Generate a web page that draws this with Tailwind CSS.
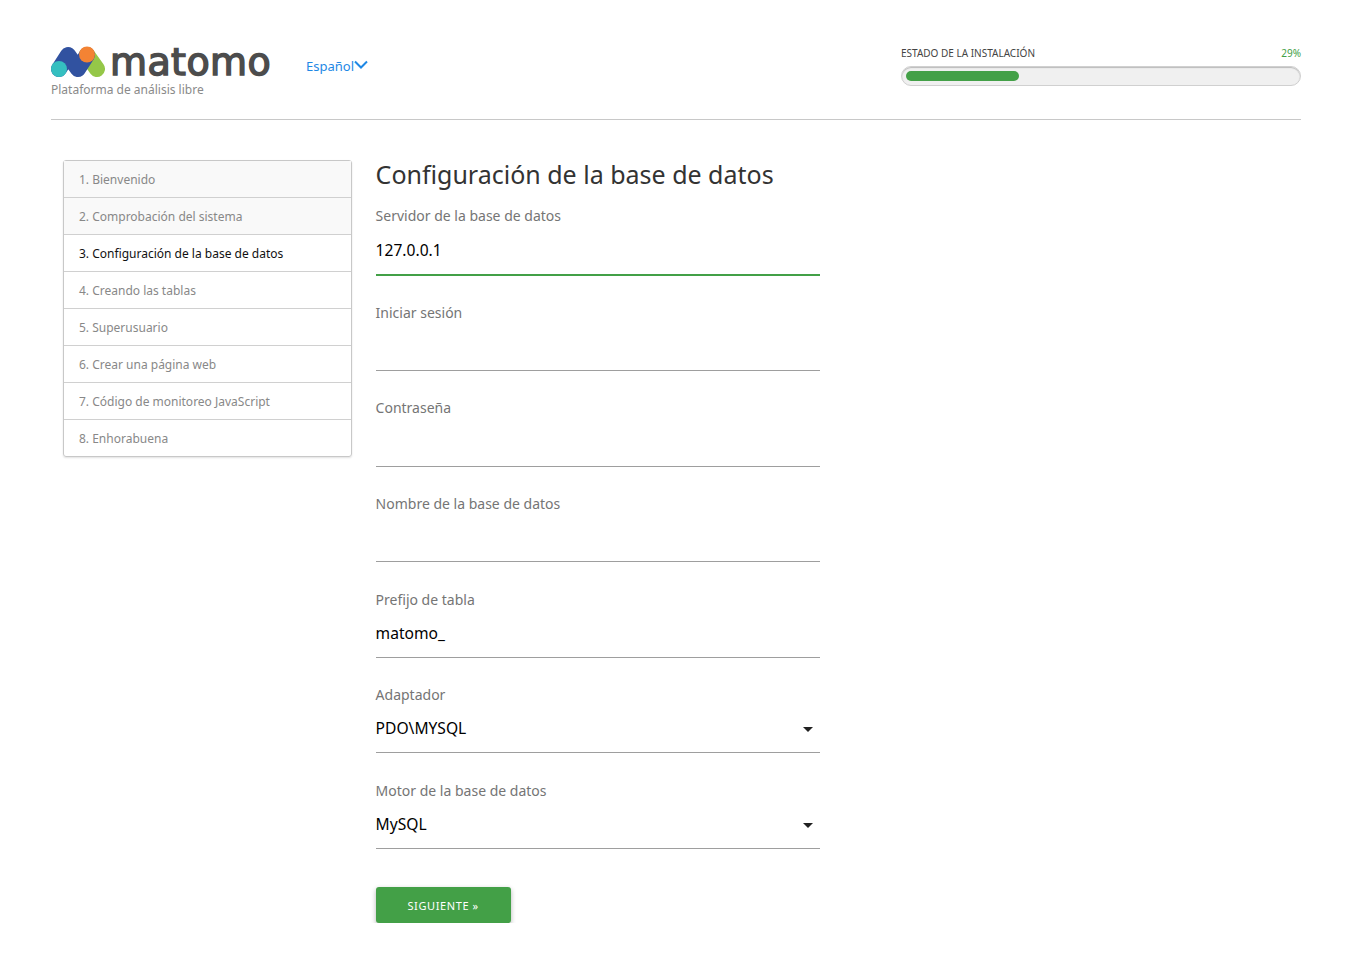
<!DOCTYPE html>
<html lang="es">
<head>
    <meta charset="UTF-8">
    <title>Matomo</title>
    <script src="https://cdn.jsdelivr.net/npm/@tailwindcss/browser@4"></script>
</head>
<body class="bg-white font-['Noto_Sans','Open_Sans',sans-serif] text-[#212121]">
    <div class="w-[1250px] ml-[51px]">
        <!-- header -->
        <header class="h-[120px] border-b border-[#c8c8c8] flex pt-[44px]">
            <div class="w-[255px]">
                <div class="flex items-center h-[36px]">
                    <svg class="w-[54px] h-[36px] shrink-0" viewBox="51 44 54 36">
                        <path d="M87 55 L97 69" fill="none" stroke="#95c748" stroke-width="16" stroke-linecap="round"/>
                        <path d="M59 69 L68 55 L78 69 L87 55" fill="none" stroke="#3152a0" stroke-width="16" stroke-linecap="round" stroke-linejoin="round"/>
                        <circle cx="59" cy="69" r="8" fill="#35bfc0"/>
                        <circle cx="87" cy="54.5" r="8" fill="#f38334"/>
                    </svg>
                    <span class="ml-[5px] text-[38px] leading-[30px] tracking-[0.4px] font-['DejaVu_Sans',sans-serif] text-[#4c4c4c] [-webkit-text-stroke:1.5px_#4c4c4c]">matomo</span>
                </div>
                <p class="text-[12px] leading-[16px] text-[#8a8a8a] mt-[2px]">Plataforma de análisis libre</p>
            </div>
            <a class="text-[13px] text-[#1e88e5] leading-[18px] mt-[13px] flex items-start">Español<svg class="w-[14px] h-[10px] mt-[3px]" viewBox="0 0 14 10"><path d="M1 1.5 L7 7.5 L13 1.5" fill="none" stroke="#1e88e5" stroke-width="2"/></svg></a>
            <div class="w-[400px] ml-auto">
                <div class="flex justify-between items-center h-[18px] text-[10px]">
                    <span class="text-[#444]">ESTADO DE LA INSTALACIÓN</span>
                    <span class="text-[#43a047]">29%</span>
                </div>
                <div class="mt-[4px] h-[20px] rounded-full bg-[#f0f0f0] border border-[#d0d0d0] shadow-[inset_0_1px_1px_#bbb] p-[4px]">
                    <div class="h-[10px] w-[113px] rounded-full bg-[#43a047]"></div>
                </div>
            </div>
        </header>

        <main class="flex mt-[40px]">
            <!-- steps -->
            <nav class="ml-[12px] w-[289px] h-[297px] border border-[#c8c8c8] rounded-[3px] shadow-[0_1px_2px_rgba(0,0,0,0.12)] text-[12px] flex flex-col">
                <div class="h-[37px] pt-[2px] flex items-center pl-[15px] bg-[#f9f9f9] text-[#888] border-b border-[#d0d0d0]">1. Bienvenido</div>
                <div class="h-[37px] pt-[2px] flex items-center pl-[15px] bg-[#f9f9f9] text-[#888] border-b border-[#d0d0d0]">2. Comprobación del sistema</div>
                <div class="h-[37px] pt-[2px] flex items-center pl-[15px] text-[#111] border-b border-[#d0d0d0]">3. Configuración de la base de datos</div>
                <div class="h-[37px] pt-[2px] flex items-center pl-[15px] text-[#888] border-b border-[#d0d0d0]">4. Creando las tablas</div>
                <div class="h-[37px] pt-[2px] flex items-center pl-[15px] text-[#888] border-b border-[#d0d0d0]">5. Superusuario</div>
                <div class="h-[37px] pt-[2px] flex items-center pl-[15px] text-[#888] border-b border-[#d0d0d0]">6. Crear una página web</div>
                <div class="h-[37px] pt-[2px] flex items-center pl-[15px] text-[#888] border-b border-[#d0d0d0]">7. Código de monitoreo JavaScript</div>
                <div class="h-[36px] pt-[2px] flex items-center pl-[15px] text-[#888]">8. Enhorabuena</div>
            </nav>

            <!-- form -->
            <section class="ml-[23.6px] w-[444.4px]">
                <h1 class="text-[25px] leading-[28px] text-[#333]">Configuración de la base de datos</h1>
                <div class="mt-[9.4px] flex flex-col text-[15.6px]">
                    <div class="h-[95.6px] pt-[8.6px]">
                        <label class="block text-[14px] leading-[20px] text-[#757575]">Servidor de la base de datos</label>
                        <div class="h-[50px] pt-[11.6px] leading-[24px] border-b-2 border-[#43a047] text-black">127.0.0.1</div>
                    </div>
                    <div class="h-[95.6px] pt-[10px]">
                        <label class="block text-[14px] leading-[20px] text-[#757575]">Iniciar sesión</label>
                        <div class="h-[48px] border-b border-[#9e9e9e]"></div>
                    </div>
                    <div class="h-[95.6px] pt-[9px]">
                        <label class="block text-[14px] leading-[20px] text-[#757575]">Contraseña</label>
                        <div class="h-[49px] border-b border-[#9e9e9e]"></div>
                    </div>
                    <div class="h-[95.6px] pt-[10px]">
                        <label class="block text-[14px] leading-[20px] text-[#757575]">Nombre de la base de datos</label>
                        <div class="h-[48px] border-b border-[#9e9e9e]"></div>
                    </div>
                    <div class="h-[95.6px] pt-[10px]">
                        <label class="block text-[14px] leading-[20px] text-[#757575]">Prefijo de tabla</label>
                        <div class="h-[48px] pt-[11px] leading-[24px] border-b border-[#9e9e9e] text-black">matomo_</div>
                    </div>
                    <div class="h-[95.6px] pt-[10px]">
                        <label class="block text-[14px] leading-[20px] text-[#757575]">Adaptador</label>
                        <div class="h-[48px] pt-[11px] leading-[24px] border-b border-[#9e9e9e] text-black flex justify-between">PDO\MYSQL<span class="mt-[11px] mr-[7px] w-0 h-0 border-x-[5px] border-x-transparent border-t-[5px] border-t-[#212121]"></span></div>
                    </div>
                    <div class="h-[95.6px] pt-[10px]">
                        <label class="block text-[14px] leading-[20px] text-[#757575]">Motor de la base de datos</label>
                        <div class="h-[48px] pt-[11px] leading-[24px] border-b border-[#9e9e9e] text-black flex justify-between">MySQL<span class="mt-[11px] mr-[7px] w-0 h-0 border-x-[5px] border-x-transparent border-t-[5px] border-t-[#212121]"></span></div>
                    </div>
                </div>
                <button class="mt-[20.4px] w-[135px] h-[36px] pt-[2px] rounded-[3px] bg-[#43a047] text-white text-[11px] tracking-[0.6px] shadow-[0_2px_5px_rgba(0,0,0,0.3)]">SIGUIENTE »</button>
            </section>
        </main>
    </div>
</body>
</html>
